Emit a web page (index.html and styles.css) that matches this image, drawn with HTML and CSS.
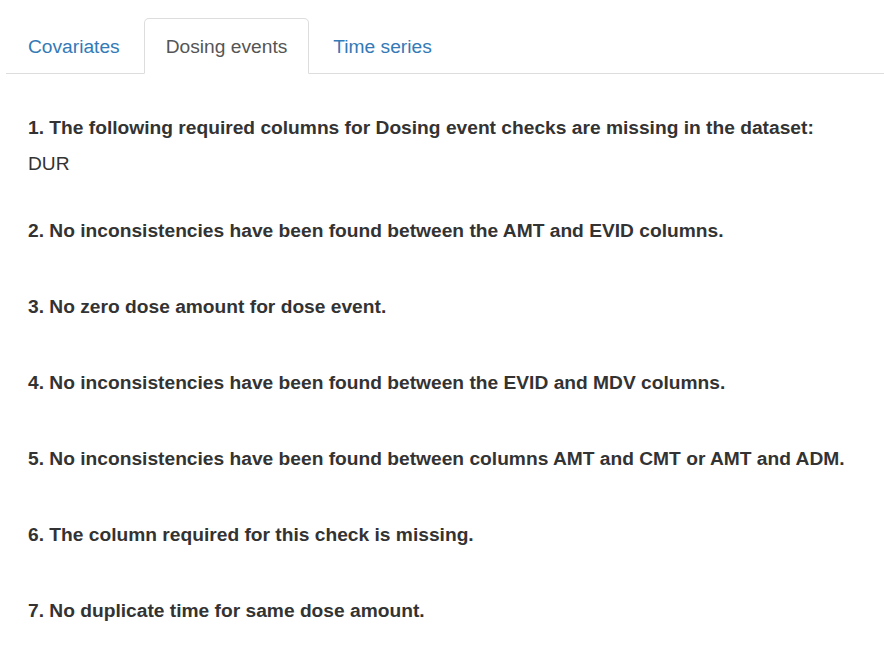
FILE: index.html
```html
<!DOCTYPE html>
<html>
<head>
<meta charset="utf-8">
<link rel="stylesheet" href="styles.css">
</head>
<body>
<div class="page">
  <ul class="tabs">
    <li class="tab"><a href="#">Covariates</a></li>
    <li class="tab active"><a href="#">Dosing events</a></li>
    <li class="tab"><a href="#">Time series</a></li>
  </ul>
  <div class="content">
    <div class="item first">
      <div class="title">1. The following required columns for Dosing event checks are missing in the dataset:</div>
      <div class="detail">DUR</div>
    </div>
    <div class="item second">
      <div class="title">2. No inconsistencies have been found between the AMT and EVID columns.</div>
    </div>
    <div class="item">
      <div class="title">3. No zero dose amount for dose event.</div>
    </div>
    <div class="item">
      <div class="title">4. No inconsistencies have been found between the EVID and MDV columns.</div>
    </div>
    <div class="item">
      <div class="title">5. No inconsistencies have been found between columns AMT and CMT or AMT and ADM.</div>
    </div>
    <div class="item">
      <div class="title">6. The column required for this check is missing.</div>
    </div>
    <div class="item">
      <div class="title">7. No duplicate time for same dose amount.</div>
    </div>
  </div>
</div>
</body>
</html>
```
FILE: styles.css
```css
html, body {
  margin: 0;
  padding: 0;
  background: #fff;
}
body {
  font-family: "Liberation Sans", Arial, sans-serif;
  font-size: 19.2px;
  line-height: 27px;
  color: #333;
}
.page {
  padding: 18px 0 0 6px;
}
.tabs {
  list-style: none;
  margin: 0;
  padding: 0;
  display: flex;
  border-bottom: 1px solid #ddd;
  height: 55px;
}
.tab {
  margin-right: 2px;
  margin-bottom: -1px;
}
.tab a {
  display: block;
  padding: 14px 21px 13px;
  line-height: 27px;
  color: #337ab7;
  text-decoration: none;
  border: 1px solid transparent;
  border-radius: 5px 5px 0 0;
}
.tab.active a {
  color: #555;
  background: #fff;
  border-color: #ddd #ddd transparent;
}
.content {
  padding: 40px 0 0 22px;
}
.title {
  font-weight: bold;
}
.detail {
  margin-top: 9px;
}
.item {
  margin-top: 49px;
}
.item.first {
  margin-top: 0;
}
.item.second {
  margin-top: 40px;
}
```
